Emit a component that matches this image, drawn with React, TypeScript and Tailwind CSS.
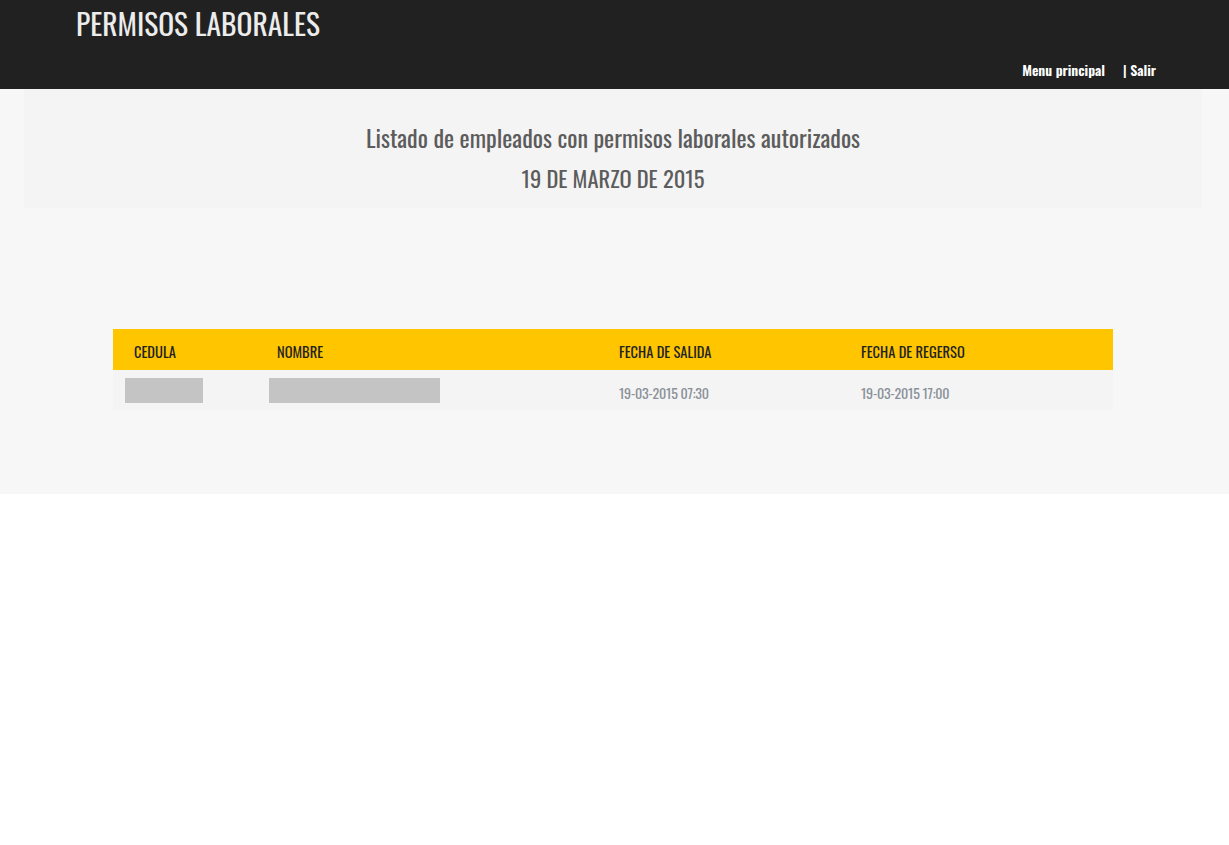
export default function App() {
  const filas = [{ salida: "19-03-2015 07:30", regreso: "19-03-2015 17:00" }];

  return (
    <div className="min-h-[845px] bg-white font-['Oswald',sans-serif]">
      {/* cabecera */}
      <header className="h-[89px] bg-[#212121] flex flex-col justify-between">
        <h1 className="pl-[76px] pt-[1px] text-[29.5px] leading-[44px] text-[#ececec]">PERMISOS LABORALES</h1>
        <nav className="flex justify-end pr-[73px] pb-[9px] text-[14px] leading-[20px] text-white font-semibold">
          <a href="#" className="mr-[18px]">Menu principal</a>
          <a href="#">| Salir</a>
        </nav>
      </header>

      {/* contenido */}
      <main className="h-[405px] bg-[#f7f7f7] pl-[24px] pr-[27px]">
        <div className="h-[119px] bg-[#f4f4f4] flex flex-col items-center pt-[30px] text-[#5c5c5c]">
          <h2 className="text-[24px] leading-[36px]">Listado de empleados con permisos laborales autorizados</h2>
          <h3 className="text-[22.5px] leading-[34px] mt-[6px]">19 DE MARZO DE 2015</h3>
        </div>

        <table className="mt-[121px] ml-[89px] w-[1000px] text-[14.5px] text-left border-collapse">
          <thead>
            <tr className="h-[41px] bg-[#ffc600] text-[#222]">
              <th className="w-[143px] pl-[21px] pt-[4px] font-normal">CEDULA</th>
              <th className="w-[342px] pl-[21px] pt-[4px] font-normal">NOMBRE</th>
              <th className="w-[242px] pl-[21px] pt-[4px] font-normal">FECHA DE SALIDA</th>
              <th className="w-[273px] pl-[21px] pt-[4px] font-normal">FECHA DE REGERSO</th>
            </tr>
          </thead>
          <tbody>
            {filas.map((f, i) => (
              <tr key={i} className="h-[40px] bg-[#f4f4f4] text-[#8a9099] text-[14px]">
                <td className="pl-[12px]">
                  <div className="w-[78px] h-[25px] bg-[#c4c4c4] mt-[1px]" />
                </td>
                <td className="pl-[13px]">
                  <div className="w-[171px] h-[25px] bg-[#c4c4c4]" />
                </td>
                <td className="pl-[21px] pt-[4px] tracking-[-0.2px]">{f.salida}</td>
                <td className="pl-[21px] pt-[4px] tracking-[-0.2px]">{f.regreso}</td>
              </tr>
            ))}
          </tbody>
        </table>
      </main>
    </div>
  );
}
